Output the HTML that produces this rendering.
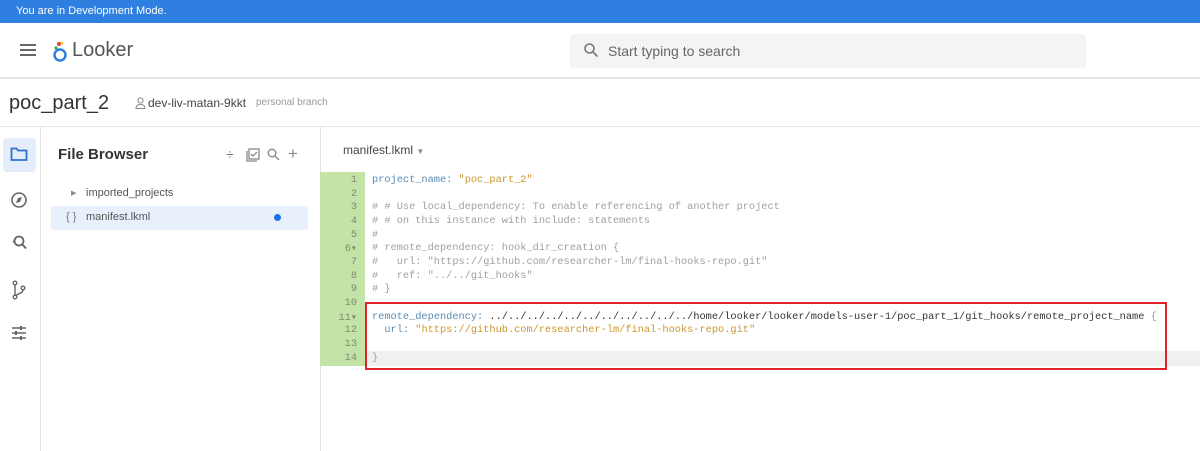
<!DOCTYPE html>
<html><head><style>
*{margin:0;padding:0;box-sizing:border-box}
body{width:1200px;height:451px;overflow:hidden;background:#fff;font-family:"Liberation Sans",sans-serif;position:relative;color:#333}
.abs{position:absolute}
.mono{font-family:"Liberation Mono",monospace;font-size:10.3px;white-space:pre}
.ln{position:absolute;left:320px;width:45px;text-align:right;padding-right:8px;color:#7d8a75;font-family:"Liberation Mono",monospace;font-size:10.3px}
.cl{position:absolute;left:372px}
.c{color:#a0a0a0}.k{color:#5b8ab0}.s{color:#c9972c}.d{color:#333}
</style></head><body>
<div class="abs" style="left:0;top:0;width:1200px;height:23px;background:#2f7fe0;color:#fff;font-size:11px;line-height:23px;padding-left:16px">You are in Development Mode.</div>
<div class="abs" style="left:20px;top:44px;width:16px;height:2px;background:#666;box-shadow:0 5px 0 #666,0 10px 0 #666"></div>
<svg class="abs" style="left:51px;top:39px" width="20" height="24" viewBox="0 0 20 24"><circle cx="9" cy="16" r="5.5" fill="none" stroke="#2f7fe0" stroke-width="2.5"/><circle cx="8" cy="5" r="2" fill="#e8453c"/><circle cx="5" cy="9" r="1.6" fill="#34a853"/><circle cx="11" cy="4" r="1.3" fill="#fbbc04"/></svg>
<div class="abs" style="left:72px;top:39px;font-size:20px;color:#555">Looker</div>
<div class="abs" style="left:570px;top:34px;width:516px;height:34px;background:#f3f4f6;border-radius:4px"></div>
<svg class="abs" style="left:583px;top:42px" width="16" height="16" viewBox="0 0 16 16"><circle cx="6.5" cy="6.5" r="4.5" fill="none" stroke="#777" stroke-width="1.6"/><path d="M10 10l4.5 4.5" stroke="#777" stroke-width="1.6"/></svg>
<div class="abs" style="left:608px;top:43px;font-size:14px;color:#666">Start typing to search</div>
<div class="abs" style="left:0;top:77px;width:1200px;height:2px;background:#e6e6e6"></div>
<div class="abs" style="left:9px;top:92px;font-size:20px;color:#333">poc_part_2</div>
<svg class="abs" style="left:135px;top:97px" width="11" height="12" viewBox="0 0 11 12"><circle cx="5.5" cy="3.5" r="2.6" fill="none" stroke="#888"/><path d="M1 11.5c0-3 2-4 4.5-4s4.5 1 4.5 4z" fill="none" stroke="#888"/></svg>
<div class="abs" style="left:148px;top:96px;font-size:12px;color:#444">dev-liv-matan-9kkt</div>
<div class="abs" style="left:256px;top:97px;font-size:10px;color:#999">personal branch</div>
<div class="abs" style="left:0;top:126px;width:1200px;height:1px;background:#e6e6e6"></div>
<div class="abs" style="left:40px;top:127px;width:1px;height:324px;background:#e2e2e2"></div>
<div class="abs" style="left:320px;top:127px;width:1px;height:324px;background:#e2e2e2"></div>
<div class="abs" style="left:3px;top:138px;width:33px;height:34px;background:#e3edfb;border-radius:4px"></div>
<svg class="abs" style="left:10px;top:146px" width="18" height="16" viewBox="0 0 18 16"><path d="M1.5 2.5h5l1.5 2h8.5v9.5h-15z" fill="none" stroke="#2f6fd0" stroke-width="1.8"/></svg>
<svg class="abs" style="left:10px;top:191px" width="18" height="18" viewBox="0 0 18 18"><circle cx="9" cy="9" r="7" fill="none" stroke="#666" stroke-width="1.6"/><path d="M6 12l2-5 4-1-2 5z" fill="#666"/></svg>
<svg class="abs" style="left:10px;top:234px" width="18" height="18" viewBox="0 0 18 18"><circle cx="9" cy="7" r="4.5" fill="none" stroke="#666" stroke-width="1.8"/><path d="M12 10l4 4.5" stroke="#666" stroke-width="2"/><path d="M3 7l2 2" stroke="#666" stroke-width="1.5"/></svg>
<svg class="abs" style="left:11px;top:280px" width="16" height="20" viewBox="0 0 16 20"><circle cx="4" cy="3" r="1.8" fill="none" stroke="#666" stroke-width="1.4"/><circle cx="4" cy="17" r="1.8" fill="none" stroke="#666" stroke-width="1.4"/><circle cx="12" cy="8" r="1.8" fill="none" stroke="#666" stroke-width="1.4"/><path d="M4 5v10M12 10c0 3-4 3-7 5.5" fill="none" stroke="#666" stroke-width="1.4"/></svg>
<svg class="abs" style="left:11px;top:325px" width="16" height="16" viewBox="0 0 16 16"><path d="M1 3h14M1 8h14M1 13h14" stroke="#666" stroke-width="1.6"/><path d="M10 1v4M5 6v4M10 11v4" stroke="#666" stroke-width="2"/></svg>
<div class="abs" style="left:58px;top:146px;font-size:15px;font-weight:bold;color:#333">File Browser</div>
<div class="abs" style="left:226px;top:146px;font-size:14px;color:#777">÷</div>
<svg class="abs" style="left:246px;top:148px" width="14" height="14" viewBox="0 0 14 14"><rect x="3" y="1" width="10" height="10" fill="none" stroke="#888" stroke-width="1.3"/><path d="M1 3v10h10" fill="none" stroke="#888" stroke-width="1.3"/><path d="M5 6l2 2 4-4" fill="none" stroke="#888" stroke-width="1.3"/></svg>
<svg class="abs" style="left:267px;top:148px" width="13" height="13" viewBox="0 0 13 13"><circle cx="5" cy="5" r="3.8" fill="none" stroke="#888" stroke-width="1.4"/><path d="M8 8l4 4" stroke="#888" stroke-width="1.5"/></svg>
<div class="abs" style="left:288px;top:144px;font-size:17px;color:#888">+</div>
<div class="abs" style="left:71px;top:189px;font-size:7px;color:#888">▶</div>
<div class="abs" style="left:86px;top:187px;font-size:11px;color:#555">imported_projects</div>
<div class="abs" style="left:51px;top:206px;width:257px;height:24px;background:#e8f0fb;border-radius:3px"></div>
<div class="abs" style="left:66px;top:211px;font-size:11px;color:#777">{ }</div>
<div class="abs" style="left:86px;top:211px;font-size:11px;color:#555">manifest.lkml</div>
<div class="abs" style="left:274px;top:214px;width:7px;height:7px;border-radius:50%;background:#1a73e8"></div>
<div class="abs" style="left:343px;top:143px;font-size:12px;color:#444">manifest.lkml <span style="font-size:8px;color:#888">▼</span></div>
<div class="abs" style="left:320px;top:172px;width:45px;height:194px;background:#c4e3a6"></div>
<div class="abs" style="left:366px;top:351px;width:834px;height:15px;background:#f0f0f0"></div>
<div class="ln" style="top:174px">1</div><div class="cl mono" style="top:174px"><span class="k">project_name: </span><span class="s">"poc_part_2"</span></div>
<div class="ln" style="top:188px">2</div>
<div class="ln" style="top:201px">3</div><div class="cl mono c" style="top:201px"># # Use local_dependency: To enable referencing of another project</div>
<div class="ln" style="top:215px">4</div><div class="cl mono c" style="top:215px"># # on this instance with include: statements</div>
<div class="ln" style="top:229px">5</div><div class="cl mono c" style="top:229px">#</div>
<div class="ln" style="top:242px">6▾</div><div class="cl mono c" style="top:242px"># remote_dependency: hook_dir_creation {</div>
<div class="ln" style="top:256px">7</div><div class="cl mono c" style="top:256px">#   url: "https://github.com/researcher-lm/final-hooks-repo.git"</div>
<div class="ln" style="top:270px">8</div><div class="cl mono c" style="top:270px">#   ref: "../../git_hooks"</div>
<div class="ln" style="top:283px">9</div><div class="cl mono c" style="top:283px"># }</div>
<div class="ln" style="top:297px">10</div>
<div class="ln" style="top:311px">11▾</div><div class="cl mono" style="top:311px"><span class="k">remote_dependency: </span><span class="d">../../../../../../../../../../../home/looker/looker/models-user-1/poc_part_1/git_hooks/remote_project_name</span> <span class="c">{</span></div>
<div class="ln" style="top:324px">12</div><div class="cl mono" style="top:324px">  <span class="k">url: </span><span class="s">"https://github.com/researcher-lm/final-hooks-repo.git"</span></div>
<div class="ln" style="top:338px">13</div>
<div class="ln" style="top:352px">14</div><div class="cl mono c" style="top:352px">}</div>
<div class="abs" style="left:365px;top:302px;width:802px;height:68px;border:2px solid #e0222a"></div>
</body></html>
